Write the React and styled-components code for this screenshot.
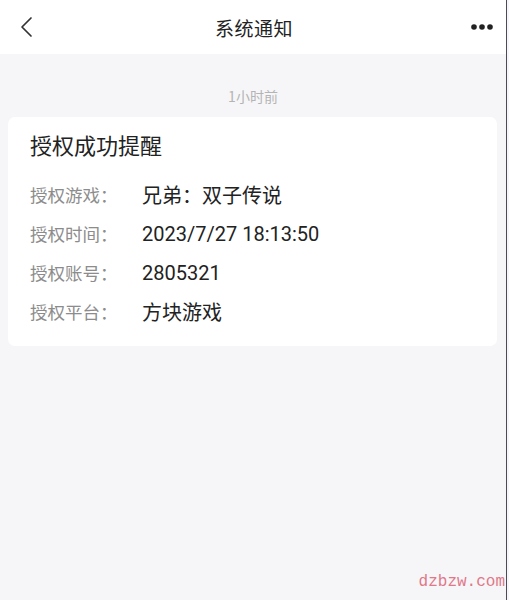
import React from "react";
import styled, { createGlobalStyle } from "styled-components";

const GlobalStyle = createGlobalStyle`
  html, body {
    margin: 0;
    padding: 0;
    background: #f6f6f8;
    font-family: "Noto Sans CJK SC", "Noto Sans", sans-serif;
  }
`;

const Page = styled.div`
  width: 506px;
  height: 600px;
  background: #f6f6f8;
  border-right: 1px solid #4b4b58;
  display: flex;
  flex-direction: column;
  position: relative;
  overflow: hidden;
`;

const NavBar = styled.div`
  height: 54px;
  background: #fff;
  display: flex;
  align-items: center;
  justify-content: space-between;
  padding: 0 12px 0 14px;
`;

const Title = styled.div`
  font-size: 19px;
  color: #222;
  letter-spacing: 0.5px;
`;

const IconBtn = styled.div`
  width: 24px;
  display: flex;
  align-items: center;
  justify-content: center;
`;

const TimeLabel = styled.div`
  text-align: center;
  font-size: 14px;
  color: #b4b4b4;
  margin-top: 32px;
  line-height: 20px;
`;

const Card = styled.div`
  margin: 11px 9px 0 8px;
  background: #fff;
  border-radius: 7px;
  padding: 12px 22px 15px 22px;
`;

const CardTitle = styled.div`
  font-size: 22px;
  color: #222;
  line-height: 30px;
  margin-bottom: 16px;
`;

const Row = styled.div`
  display: flex;
  align-items: center;
  height: 39px;
`;

const Label = styled.div`
  width: 112px;
  font-size: 17.5px;
  color: #8c8c8c;
`;

const Value = styled.div`
  font-size: 20px;
  color: #222;
  font-family: Roboto, "Noto Sans CJK SC", sans-serif;
`;

const Watermark = styled.div`
  position: absolute;
  right: 1px;
  bottom: 9px;
  font-family: "Liberation Mono", monospace;
  font-size: 16px;
  color: #e0788a;
`;

const rows = [
  ["授权游戏：", "兄弟：双子传说"],
  ["授权时间：", "2023/7/27 18:13:50"],
  ["授权账号：", "2805321"],
  ["授权平台：", "方块游戏"],
];

export default function App() {
  return (
    <>
      <GlobalStyle />
      <Page>
        <NavBar>
          <IconBtn>
            <svg width="14" height="22" viewBox="0 0 14 22">
              <path d="M12 2 L3 11 L12 20" fill="none" stroke="#333" strokeWidth="1.7" strokeLinecap="round" strokeLinejoin="round" />
            </svg>
          </IconBtn>
          <Title>系统通知</Title>
          <IconBtn>
            <svg width="22" height="6" viewBox="0 0 22 6">
              <circle cx="3" cy="3" r="2.8" fill="#222" />
              <circle cx="11" cy="3" r="2.8" fill="#222" />
              <circle cx="19" cy="3" r="2.8" fill="#222" />
            </svg>
          </IconBtn>
        </NavBar>
        <TimeLabel>1小时前</TimeLabel>
        <Card>
          <CardTitle>授权成功提醒</CardTitle>
          {rows.map(([k, v]) => (
            <Row key={k}>
              <Label>{k}</Label>
              <Value>{v}</Value>
            </Row>
          ))}
        </Card>
        <Watermark>dzbzw.com</Watermark>
      </Page>
    </>
  );
}
